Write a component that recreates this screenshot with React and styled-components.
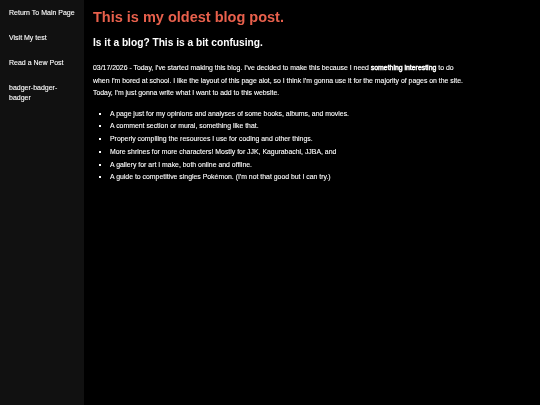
import styled, { createGlobalStyle } from "styled-components";

const GlobalStyle = createGlobalStyle`
  html, body {
    margin: 0;
    padding: 0;
    background: #000;
    height: 100%;
  }
  #root {
    height: 100%;
  }
`;

const Layout = styled.div`
  display: flex;
  min-height: 405px;
  height: 100%;
  font-family: "Liberation Sans", Arial, sans-serif;
  color: #fff;
`;

const Sidebar = styled.nav`
  width: 84px;
  flex-shrink: 0;
  background: #111;
  padding: 8px 6px 0 9px;
  box-sizing: border-box;
`;

const NavList = styled.div`
  display: flex;
  flex-direction: column;
  gap: 15.5px;
  will-change: transform;
`;

const NavLink = styled.a`
  color: #fff;
  text-decoration: none;
  font-size: 7px;
  line-height: 9.5px;
  -webkit-text-stroke: 0.1px #fff;
`;

const Main = styled.main`
  flex: 1;
  background: #000;
  padding: 9px;
`;

const Article = styled.article`
  width: 370px;
  will-change: transform;
`;

const Title = styled.h1`
  color: #e8604c;
  font-size: 14.5px;
  font-weight: bold;
  margin: 0 0 12px;
`;

const Subtitle = styled.h2`
  font-size: 10.2px;
  font-weight: bold;
  margin: 0 0 13px;
`;

const Paragraph = styled.p`
  font-size: 6.9px;
  line-height: 12.5px;
  margin: 0 0 8px;
  padding-top: 1px;
  -webkit-text-stroke: 0.1px #fff;
`;

const Strong = styled.strong`
  font-weight: normal;
  -webkit-text-stroke: 0.45px #fff;
`;

const List = styled.ul`
  margin: 0;
  padding-left: 17px;
  list-style: square;
  font-size: 6.9px;
  line-height: 12.8px;
  -webkit-text-stroke: 0.1px #fff;
`;

const Item = styled.li``;

const links = [
  "Return To Main Page",
  "Visit My test",
  "Read a New Post",
  "badger-badger-badger",
];

const items = [
  "A page just for my opinions and analyses of some books, albums, and movies.",
  "A comment section or mural, something like that.",
  "Properly compiling the resources I use for coding and other things.",
  "More shrines for more characters! Mostly for JJK, Kagurabachi, JJBA, and",
  "A gallery for art I make, both online and offline.",
  "A guide to competitive singles Pokémon. (I'm not that good but I can try.)",
];

export default function App() {
  return (
    <>
      <GlobalStyle />
      <Layout>
        <Sidebar>
          <NavList>
            {links.map((l) => (
              <NavLink key={l} href="#">
                {l}
              </NavLink>
            ))}
          </NavList>
        </Sidebar>
        <Main>
          <Article>
            <Title>This is my oldest blog post.</Title>
            <Subtitle>Is it a blog? This is a bit confusing.</Subtitle>
            <Paragraph>
              03/17/2026 - Today, I've started making this blog. I've decided
              to make this because I need <Strong>something interesting</Strong>{" "}
              to do when I'm bored at school. I like the layout of this page
              alot, so I think I'm gonna use it for the majority of pages on
              the site. Today, I'm just gonna write what I want to add to this
              website.
            </Paragraph>
            <List>
              {items.map((t) => (
                <Item key={t}>{t}</Item>
              ))}
            </List>
          </Article>
        </Main>
      </Layout>
    </>
  );
}
